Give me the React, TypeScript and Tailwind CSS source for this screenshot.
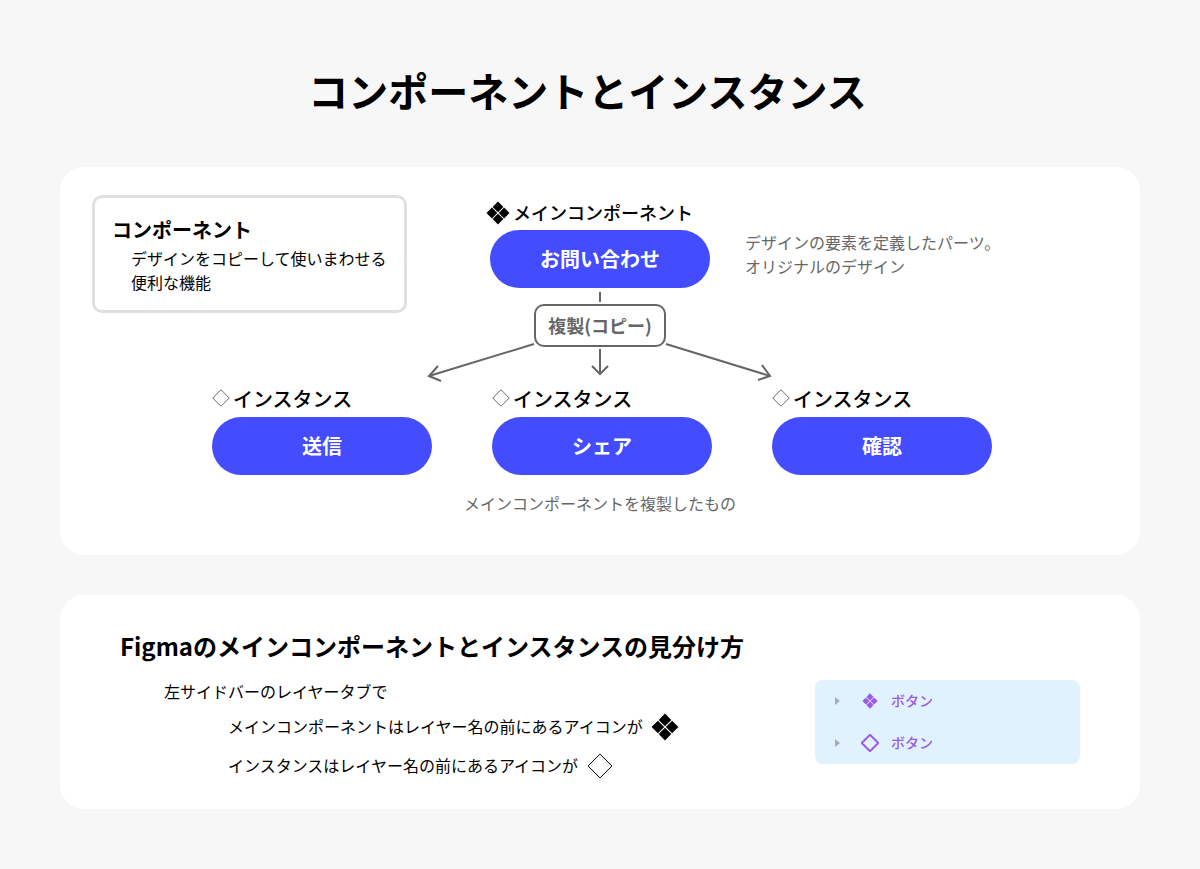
import React from 'react';

const font = "font-['Noto_Sans_CJK_JP','Noto_Sans',sans-serif]";

const MainIcon = ({ size, color = '#000' }: { size: number; color?: string }) => (
  <svg width={size} height={size} viewBox="0 0 24 24" fill={color} className="shrink-0">
    <path d="M12 0.5 L17.4 5.9 L12 11.3 L6.6 5.9 Z" />
    <path d="M12 12.7 L17.4 18.1 L12 23.5 L6.6 18.1 Z" />
    <path d="M5.9 6.6 L11.3 12 L5.9 17.4 L0.5 12 Z" />
    <path d="M18.1 6.6 L23.5 12 L18.1 17.4 L12.7 12 Z" />
  </svg>
);

const InstanceIcon = ({ size, color = '#666', stroke = 1 }: { size: number; color?: string; stroke?: number }) => (
  <svg width={size} height={size} viewBox="0 0 24 24" fill="none" className="shrink-0">
    <path d="M12 1 L23 12 L12 23 L1 12 Z" stroke={color} strokeWidth={stroke} vectorEffect="non-scaling-stroke" />
  </svg>
);

const PillButton = ({ label }: { label: string }) => (
  <div className="flex h-[58px] w-[220px] items-center justify-center rounded-[29px] bg-[#444cff] text-[20px] font-bold text-white">
    {label}
  </div>
);

const Instance = ({ label }: { label: string }) => (
  <div className="w-[220px]">
    <div className="flex h-[24px] items-center gap-[3px] text-[20px] font-medium leading-[24px] text-black">
      <InstanceIcon size={18} />
      <span className="pt-[2px]">インスタンス</span>
    </div>
    <div className="mt-[7px]">
      <PillButton label={label} />
    </div>
  </div>
);

const LayerRow = ({ icon }: { icon: React.ReactNode }) => (
  <div className="flex items-center">
    <div className="h-0 w-0 border-y-[4px] border-l-[5px] border-y-transparent border-l-[#a9a9b8]" />
    <div className="ml-[22px] flex w-[16px] justify-center">{icon}</div>
    <span className="ml-[13px] pb-[2px] text-[14px] font-medium leading-[20px] text-[#9b5de5]">ボタン</span>
  </div>
);

export default function App() {
  return (
    <div className={`${font} h-[869px] w-[1200px] overflow-hidden bg-[#f7f7f7] text-black`}>
      <h1 className="pt-[60px] pr-[25px] text-center text-[40px] font-bold leading-[60px]">コンポーネントとインスタンス</h1>

      <section className="relative mx-[60px] mt-[47px] h-[388px] rounded-[24px] bg-white">
        <svg className="absolute inset-0" width="1080" height="388" fill="none" stroke="#666" strokeWidth="2">
          <path d="M474 177 L369 209" />
          <path d="M378 199 L369 209 L381 214" />
          <path d="M540 182 L540 207" />
          <path d="M532 199 L540 207 L548 199" />
          <path d="M606 177 L710 209" />
          <path d="M698 213 L710 209 L702 198" />
        </svg>

        <div className="relative flex items-start">
          <div className="ml-[32px] mt-[28px] h-[118px] w-[315px] rounded-[10px] border-[3px] border-[#e0e0e0] pl-[17px] pt-[18px]">
            <p className="text-[20px] font-bold leading-[28px]">コンポーネント</p>
            <p className="mt-[2px] pl-[19px] text-[16px] leading-[24px]">
              デザインをコピーして使いまわせる
              <br />
              便利な機能
            </p>
          </div>

          <div className="ml-[83px] w-[220px] pt-[34px]">
            <div className="-ml-[4px] flex h-[24px] items-center gap-[3px] text-[18px] font-medium leading-[24px]">
              <MainIcon size={24} />
              <span className="pb-[2px]">メインコンポーネント</span>
            </div>
            <div className="mt-[5px]">
              <PillButton label="お問い合わせ" />
            </div>
            <div className="mx-auto mt-[4px] h-[10px] w-[2px] bg-[#666]" />
            <div className="mx-auto mt-[2px] flex h-[43px] w-[132px] items-center justify-center rounded-[10px] border-2 border-[#666] bg-white text-[18px] font-bold text-[#666]">
              複製(コピー)
            </div>
          </div>

          <p className="ml-[35px] pt-[63px] text-[16px] leading-[24px] text-[#666]">
            デザインの要素を定義したパーツ。
            <br />
            オリジナルのデザイン
          </p>
        </div>

        <div className="relative mt-[39px] flex gap-[60px] pl-[152px]">
          <Instance label="送信" />
          <Instance label="シェア" />
          <Instance label="確認" />
        </div>

        <p className="relative mt-[16px] text-center text-[16px] leading-[24px] text-[#666]">
          メインコンポーネントを複製したもの
        </p>
      </section>

      <section className="mx-[60px] mt-[40px] flex h-[214px] justify-between rounded-[24px] bg-white pl-[60px] pr-[60px]">
        <div>
          <h2 className="pt-[33px] text-[24px] font-bold leading-[36px]">Figmaのメインコンポーネントとインスタンスの見分け方</h2>
          <p className="mt-[15px] pl-[44px] text-[16px] leading-[24px]">左サイドバーのレイヤータブで</p>
          <div className="mt-[6px] flex h-[36px] items-center gap-[8px] pl-[108px] text-[16px]">
            <span className="pb-[2px]">メインコンポーネントはレイヤー名の前にあるアイコンが</span>
            <MainIcon size={28} />
          </div>
          <div className="mt-[3px] flex h-[36px] items-center gap-[9px] pl-[108px] text-[16px]">
            <span className="pb-[2px]">インスタンスはレイヤー名の前にあるアイコンが</span>
            <InstanceIcon size={26} color="#000" />
          </div>
        </div>

        <div className="mt-[85px] flex h-[84px] w-[265px] flex-col justify-center gap-[20px] rounded-[8px] bg-[#e1f2ff] bg-[radial-gradient(#d3e8fa_0.6px,transparent_0.6px)] bg-[size:4px_4px] pl-[20px]">
          <LayerRow icon={<MainIcon size={16} color="#9b5de5" />} />
          <LayerRow icon={<InstanceIcon size={18} color="#9b5de5" stroke={2} />} />
        </div>
      </section>
    </div>
  );
}
